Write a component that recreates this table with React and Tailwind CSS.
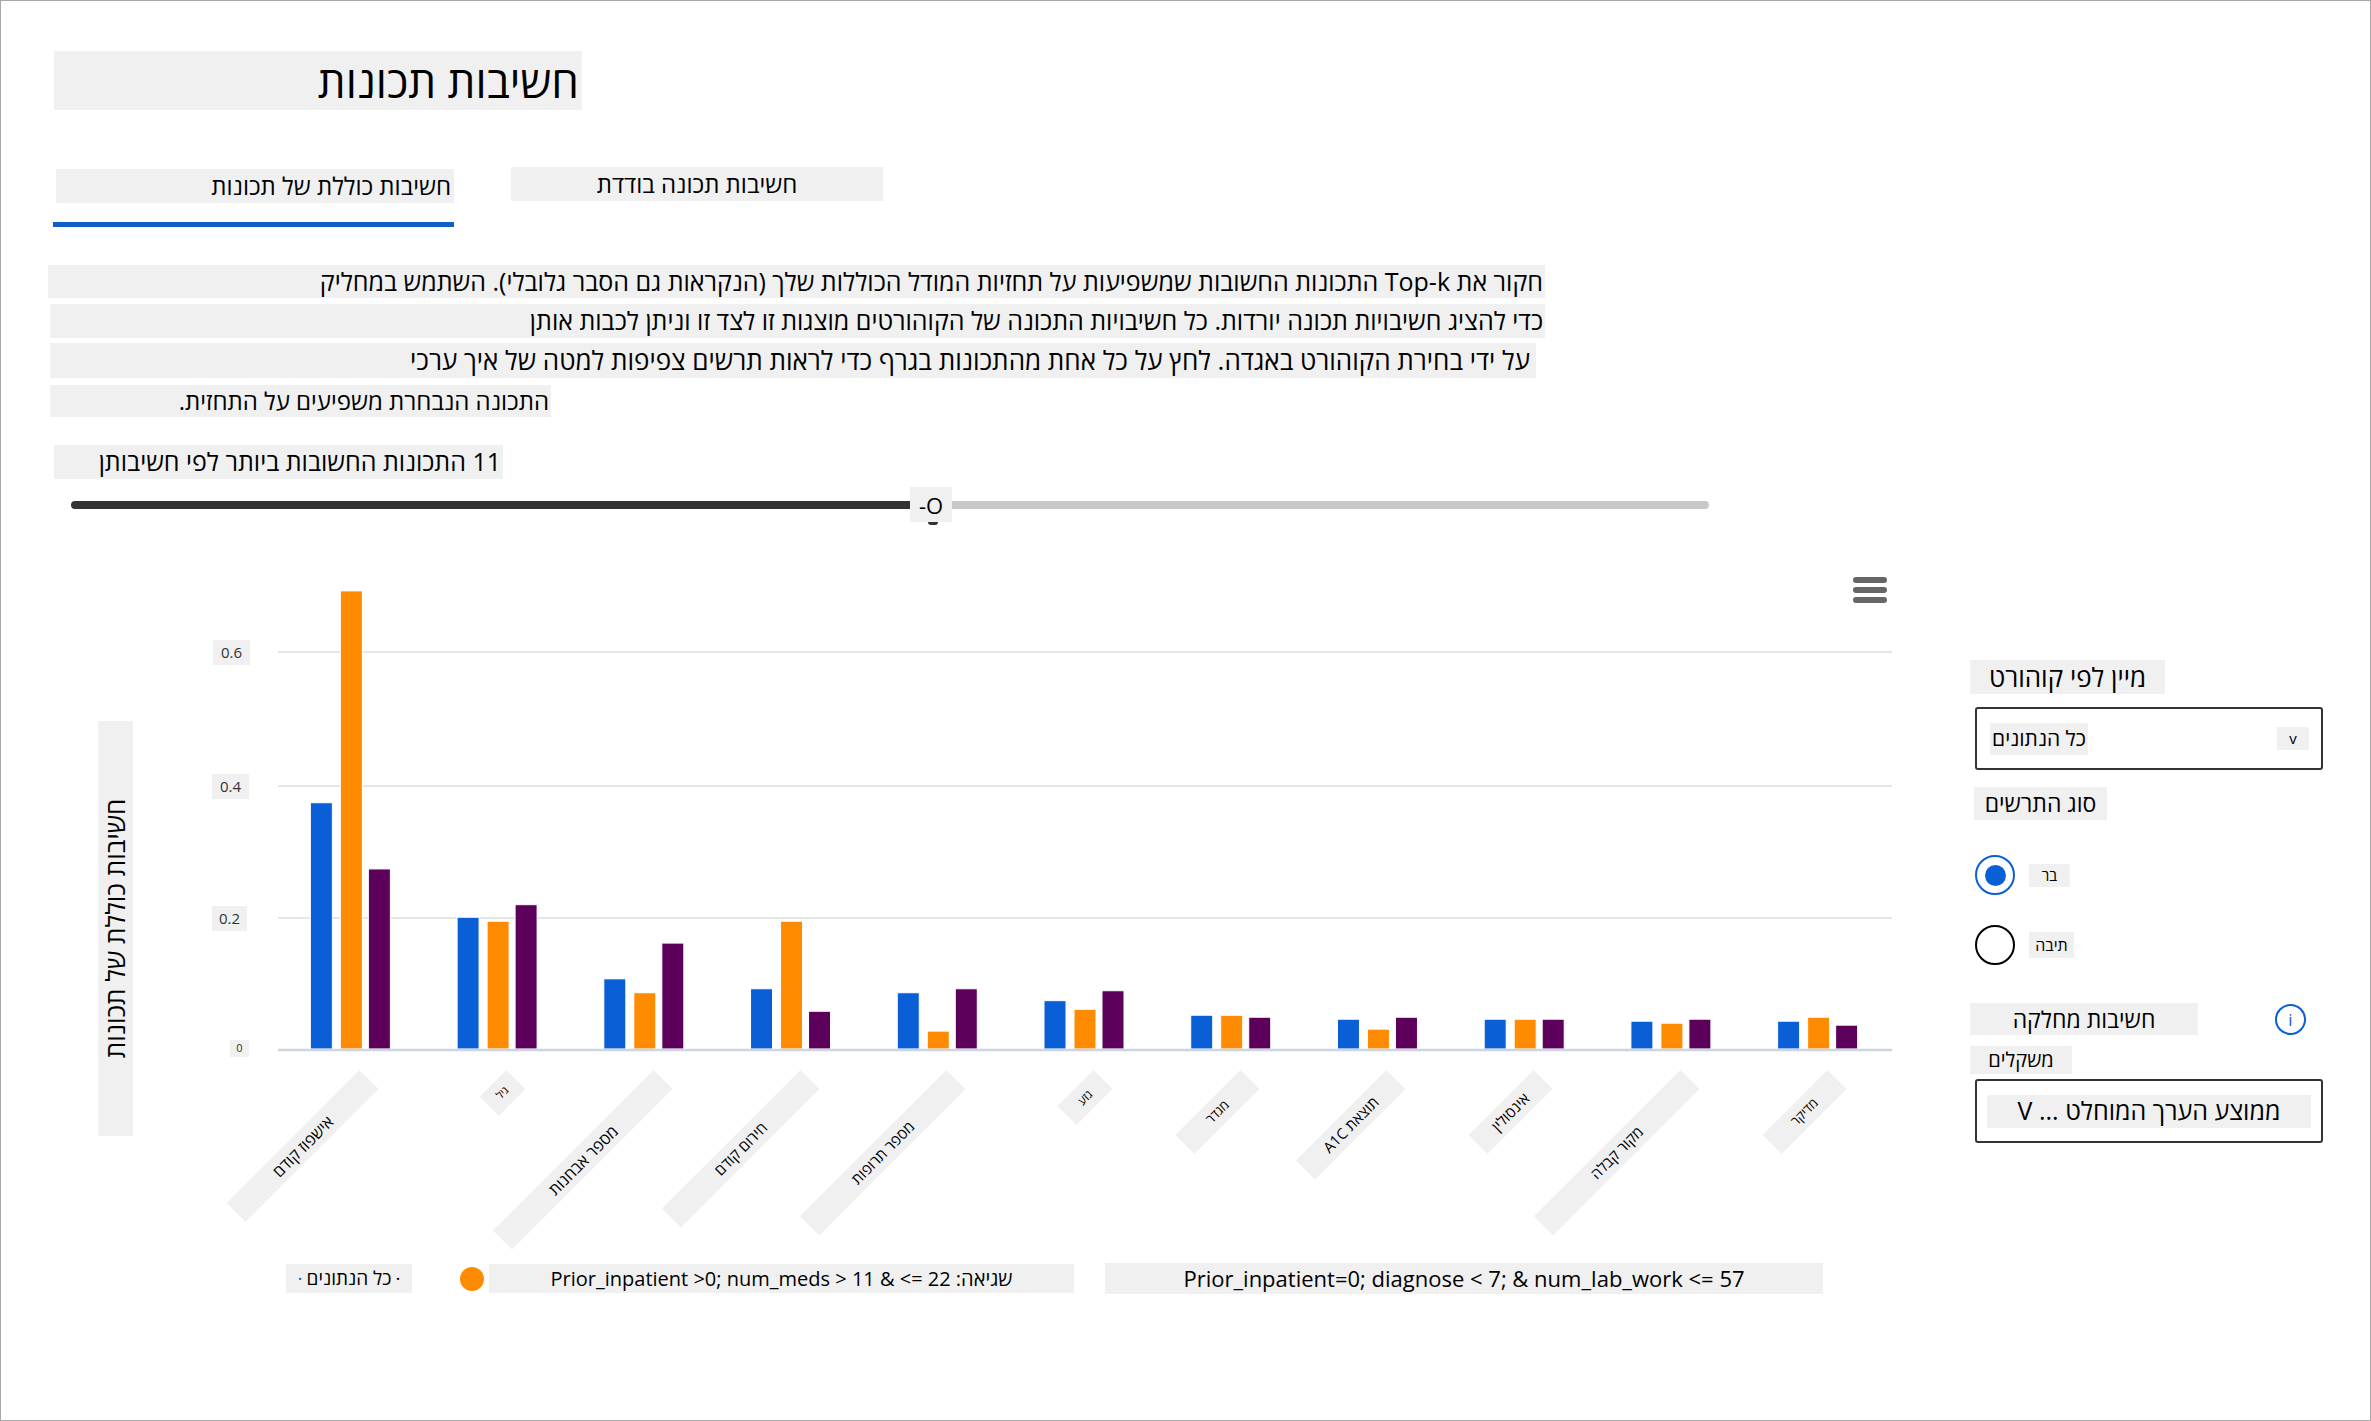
import React from 'react';

// bar colours: all data / error cohort / second cohort
const COLORS = ['#0a5fd6', '#ff8c00', '#5c005c'];

const FEATURES = [
  { label: 'אישפוז קודם', len: 188, size: 16, v: [0.372, 0.692, 0.272] },
  { label: 'גיל', len: 38, size: 11, v: [0.199, 0.193, 0.218] },
  { label: 'מספר אבחנות', len: 227, size: 16, v: [0.106, 0.085, 0.16] },
  { label: 'חירום קודם', len: 196, size: 15, v: [0.091, 0.193, 0.057] },
  { label: 'מספר תרופות', len: 207, size: 15, v: [0.085, 0.027, 0.091] },
  { label: 'גזע', len: 51, size: 12, v: [0.073, 0.06, 0.088] },
  { label: 'מגדר', len: 92, size: 13, v: [0.051, 0.051, 0.048] },
  { label: 'תוצאת A1C', len: 128, size: 15, v: [0.045, 0.03, 0.048] },
  { label: 'אינסולין', len: 92, size: 15, v: [0.045, 0.045, 0.045] },
  { label: 'מקור קבלה', len: 207, size: 15, v: [0.042, 0.039, 0.045] },
  { label: 'מדיקר', len: 92, size: 13, v: [0.042, 0.048, 0.036] },
];

const PLOT_LEFT = 277;
const PLOT_RIGHT = 1891;
const BASE = 499;
const UNIT = 662; // px per 1.0 of importance
const STEP = (PLOT_RIGHT - PLOT_LEFT) / FEATURES.length;

const TICKS = [
  { t: '0.6', y: 102, cls: 'left-[212px] w-[37px] h-[25px] text-[15px]' },
  { t: '0.4', y: 236, cls: 'left-[211px] w-[37px] h-[25px] text-[15px]' },
  { t: '0.2', y: 368, cls: 'left-[211px] w-[35px] h-[25px] text-[15px]' },
];

const Chart = () => (
  <div className="relative mt-[28px] h-[700px] w-[1910px]">
    <svg className="absolute left-0 top-0" width="1910" height="700">
      {[102, 236, 368].map(y => (
        <line key={y} x1={PLOT_LEFT} x2={PLOT_RIGHT} y1={y} y2={y} stroke="#e6e6e6" strokeWidth="2" />
      ))}
      {FEATURES.map((f, i) => {
        const c = PLOT_LEFT + STEP * (i + 0.5);
        return [-41, -11, 17].map((off, j) => {
          const h = f.v[j] * UNIT;
          return (
            <rect key={`${i}-${j}`} x={c + off} y={BASE - h} width="22" height={h} fill={COLORS[j]} stroke="#fff" strokeWidth="1" />
          );
        });
      })}
      <line x1={PLOT_LEFT} x2={PLOT_RIGHT} y1={BASE + 1} y2={BASE + 1} stroke="#ccd6e2" strokeWidth="2.5" />
    </svg>

    {/* chart menu */}
    <div className="absolute left-[1852px] top-[27px] flex w-[34px] flex-col gap-[4px]">
      <div className="h-[6px] rounded-full bg-[#666]"></div>
      <div className="h-[6px] rounded-full bg-[#666]"></div>
      <div className="h-[6px] rounded-full bg-[#666]"></div>
    </div>

    {/* y ticks */}
    {TICKS.map(k => (
      <div key={k.t} className={`absolute flex items-center justify-center bg-[#f0f0f0] text-[#333] ${k.cls}`} style={{ top: k.y - 12 }}>
        {k.t}
      </div>
    ))}
    <div className="absolute left-[229px] top-[490px] flex h-[17px] w-[19px] items-center justify-center bg-[#f0f0f0] text-[11px] text-[#333]">0</div>

    {/* y axis title */}
    <div className="absolute left-[97px] top-[171px] flex h-[415px] w-[35px] items-center justify-center overflow-visible bg-[#f0f0f0]">
      <span dir="rtl" className="-rotate-90 whitespace-nowrap text-[26px] text-black">חשיבות כוללת של תכונות</span>
    </div>

    {/* x labels */}
    {FEATURES.map((f, i) => {
      const ax = PLOT_LEFT + STEP * (i + 0.5) + 18;
      return (
        <div
          key={f.label}
          dir="rtl"
          className="absolute flex h-[27px] origin-right -rotate-45 items-center justify-center whitespace-nowrap bg-[#f0f0f0] text-black"
          style={{ left: ax - f.len, top: 529 - 13, width: f.len, fontSize: f.size }}
        >
          {f.label}
        </div>
      );
    })}
  </div>
);

const Legend = () => (
  <div className="mt-[13px] flex items-center">
    <div dir="rtl" className="ml-[285px] flex h-[29px] w-[126px] items-center justify-center gap-[4px] bg-[#f0f0f0] text-[19px] text-black">
      <span>·</span>כל הנתונים<span className="text-[#0a5fd6]">·</span>
    </div>
    <div className="ml-[48px] h-[24px] w-[24px] rounded-full bg-[#ff8c00]"></div>
    <div dir="rtl" className="ml-[5px] flex h-[29px] w-[585px] items-center justify-center bg-[#f0f0f0] text-[20px] text-black">
      שגיאה: Prior_inpatient &gt;0; num_meds &gt; 11 &amp; &lt;= 22
    </div>
    <div className="ml-[31px] flex h-[31px] w-[718px] items-center justify-center bg-[#f0f0f0] text-[22px] text-black">
      Prior_inpatient=0; diagnose &lt; 7; &amp; num_lab_work &lt;= 57
    </div>
  </div>
);

const Panel = () => (
  <div className="ml-[59px] w-[360px] shrink-0 pt-[659px] text-black">
    <div dir="rtl" className="flex h-[34px] w-[195px] items-center justify-center bg-[#f0f0f0] text-[26px]">מיין לפי קוהורט</div>

    <div className="ml-[5px] mt-[13px] flex h-[63px] w-[348px] items-center justify-between rounded-[3px] border-2 border-[#333] pl-[13px] pr-[12px]">
      <div dir="rtl" className="flex h-[32px] w-[98px] items-center justify-center bg-[#f0f0f0] text-[21px]">כל הנתונים</div>
      <div className="flex h-[23px] w-[32px] items-center justify-center bg-[#f0f0f0] text-[15px]">v</div>
    </div>

    <div dir="rtl" className="ml-[4px] mt-[17px] flex h-[33px] w-[133px] items-center justify-center bg-[#f0f0f0] text-[23px]">סוג התרשים</div>

    <div className="ml-[5px] mt-[35px] flex items-center">
      <div className="flex h-[40px] w-[40px] items-center justify-center rounded-full border-2 border-[#0a5fd6]">
        <div className="h-[21px] w-[21px] rounded-full bg-[#0a5fd6]"></div>
      </div>
      <div dir="rtl" className="ml-[14px] flex h-[23px] w-[41px] items-center justify-center bg-[#f0f0f0] text-[15px]">בר</div>
    </div>

    <div className="ml-[5px] mt-[30px] flex items-center">
      <div className="h-[40px] w-[40px] rounded-full border-2 border-black"></div>
      <div dir="rtl" className="ml-[14px] flex h-[26px] w-[45px] items-center justify-center bg-[#f0f0f0] text-[16px]">תיבה</div>
    </div>

    <div className="mt-[38px] flex items-center">
      <div dir="rtl" className="flex h-[32px] w-[228px] items-center justify-center bg-[#f0f0f0] text-[23px]">חשיבות מחלקה</div>
      <div className="ml-[77px] flex h-[31px] w-[31px] items-center justify-center rounded-full border-2 border-[#0a5fd6] text-[17px] leading-none text-[#0a5fd6]">i</div>
    </div>

    <div dir="rtl" className="mt-[11px] flex h-[28px] w-[102px] items-center justify-center bg-[#f0f0f0] text-[20px]">משקלים</div>

    <div className="ml-[5px] mt-[5px] flex h-[64px] w-[348px] items-center rounded-[3px] border-2 border-[#333] pl-[10px]">
      <div dir="rtl" className="flex h-[33px] w-[324px] items-center justify-center bg-[#f0f0f0] text-[25px]">ממוצע הערך המוחלט ... V</div>
    </div>
  </div>
);

export default function App() {
  return (
    <div className="flex h-[1421px] overflow-hidden border border-[#a8a8a8] bg-white font-['Open_Sans','Liberation_Sans',sans-serif] text-black">
      <div className="w-[1910px] shrink-0 pt-[50px]">
        <div dir="rtl" className="ml-[53px] flex h-[59px] w-[528px] items-center bg-[#f0f0f0] pr-[3px] text-[44px]">
          חשיבות תכונות
        </div>

        {/* tabs */}
        <div className="mt-[57px] flex h-[36px] items-start">
          <div dir="rtl" className="ml-[55px] mt-[2px] flex h-[34px] w-[398px] items-center bg-[#f0f0f0] pr-[3px] text-[24px]">חשיבות כוללת של תכונות</div>
          <div dir="rtl" className="ml-[57px] flex h-[34px] w-[372px] items-center justify-center bg-[#f0f0f0] text-[24px]">חשיבות תכונה בודדת</div>
        </div>
        <div className="ml-[52px] mt-[19px] h-[5px] w-[401px] bg-[#0f5fc7]"></div>

        {/* description */}
        <div dir="rtl" className="ml-[47px] mt-[38px] flex h-[33px] w-[1497px] items-center bg-[#f0f0f0] pr-[2px] text-[25px]">
          חקור את  Top-k התכונות החשובות שמשפיעות על תחזיות המודל הכוללות שלך (הנקראות גם הסבר גלובלי). השתמש במחליק
        </div>
        <div dir="rtl" className="ml-[49px] mt-[6px] flex h-[34px] w-[1495px] items-center bg-[#f0f0f0] pr-[2px] text-[25px]">
          כדי להציג חשיבויות תכונה יורדות. כל חשיבויות התכונה של הקוהורטים מוצגות זו לצד זו וניתן לכבות אותן
        </div>
        <div dir="rtl" className="ml-[49px] mt-[5px] flex h-[35px] w-[1486px] items-center bg-[#f0f0f0] pr-[6px] text-[26px]">
          על ידי בחירת הקוהורט באגדה. לחץ על כל אחת מהתכונות בגרף כדי לראות תרשים צפיפות למטה של איך ערכי
        </div>
        <div dir="rtl" className="ml-[49px] mt-[7px] flex h-[32px] w-[501px] items-center bg-[#f0f0f0] pr-[2px] text-[24px]">
          התכונה הנבחרת משפיעים על התחזית.
        </div>

        {/* top-k slider */}
        <div dir="rtl" className="ml-[53px] mt-[28px] flex h-[34px] w-[449px] items-center bg-[#f0f0f0] pr-[2px] text-[25px]">
          11 התכונות החשובות ביותר לפי חשיבותן
        </div>
        <div className="ml-[70px] mt-[8px] flex h-[35px] items-center">
          <div className="h-[8px] w-[839px] rounded-l-full bg-[#333]"></div>
          <div className="relative flex h-[35px] w-[42px] items-center justify-center bg-[#f0f0f0] text-[22px] leading-none">
            -O
            <span className="absolute left-[18px] top-[35px] h-[3px] w-[10px] rounded-b-full bg-[#333]"></span>
          </div>
          <div className="h-[8px] w-[757px] rounded-r-full bg-[#c8c8c8]"></div>
        </div>

        <Chart />
        <Legend />
      </div>
      <Panel />
    </div>
  );
}
